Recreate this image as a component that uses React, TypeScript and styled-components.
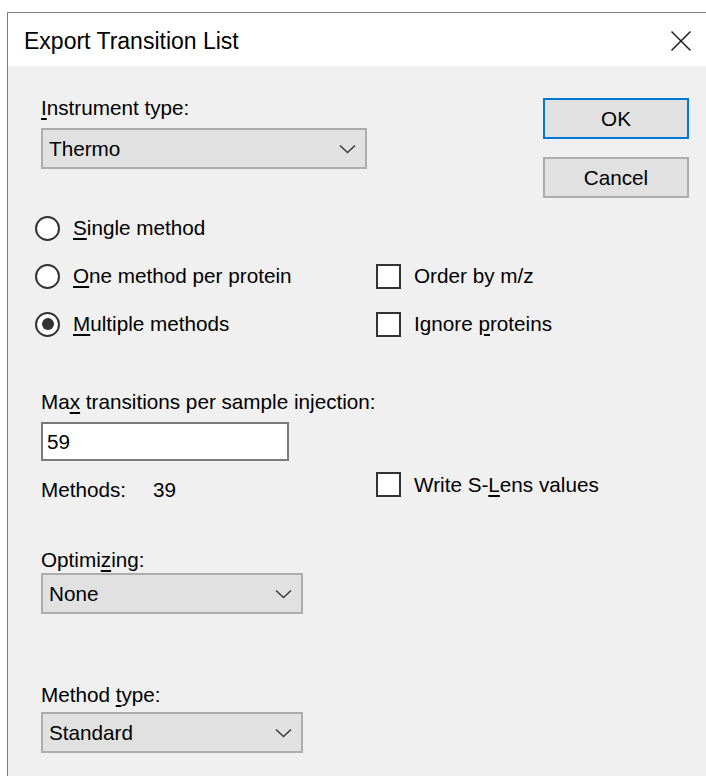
import React from "react";
import styled, { createGlobalStyle } from "styled-components";

const GlobalStyle = createGlobalStyle`
  html, body {
    margin: 0;
    padding: 0;
    background: #ffffff;
  }
  body {
    font-family: "Liberation Sans", Arial, sans-serif;
    font-size: 20.7px;
    color: #000000;
  }
  * { box-sizing: border-box; }
`;

const Window = styled.div`
  margin: 12px 0 0 7px;
  height: 764px;
  border-left: 1px solid #7c7c7c;
  border-top: 1px solid #7c7c7c;
  background: #f0f0f0;
  display: flex;
  flex-direction: column;
  overflow: hidden;
`;

const TitleBar = styled.div`
  height: 53px;
  background: #ffffff;
  display: flex;
  align-items: flex-start;
  justify-content: space-between;
  padding: 16px 14px 0 16px;
`;

const Title = styled.span`
  font-size: 23px;
  line-height: 24px;
  white-space: nowrap;
`;

const CloseButton = styled.button`
  width: 22px;
  height: 22px;
  padding: 0;
  border: none;
  background: transparent;
  display: flex;
  align-items: center;
  justify-content: center;
  margin-top: 1px;
`;

const Body = styled.div`
  flex: 1;
  padding: 30px 17px 0 33px;
  display: flex;
  flex-direction: column;
`;

const TopRow = styled.div`
  display: flex;
  justify-content: space-between;
  align-items: flex-start;
`;

const Field = styled.div<{ $top?: number }>`
  display: flex;
  flex-direction: column;
  margin-top: ${(p) => p.$top ?? 0}px;
`;

const Label = styled.span<{ $gap?: number }>`
  line-height: 24px;
  margin-bottom: ${(p) => p.$gap ?? 0}px;
  white-space: nowrap;
`;

const Key = styled.span`
  text-decoration: underline;
  text-decoration-thickness: 2px;
  text-underline-offset: 3px;
`;

const Combo = styled.div<{ $width: number }>`
  width: ${(p) => p.$width}px;
  height: 41px;
  background: #e1e1e1;
  border: 2px solid #adadad;
  display: flex;
  align-items: center;
  justify-content: space-between;
  padding: 0 9px 0 6px;
  line-height: 24px;
`;

const ButtonColumn = styled.div`
  display: flex;
  flex-direction: column;
  gap: 18px;
  margin-top: 2px;
`;

const DialogButton = styled.button<{ $default?: boolean }>`
  width: 146px;
  height: 41px;
  background: #e1e1e1;
  border: 2px solid ${(p) => (p.$default ? "#0078d7" : "#adadad")};
  font-family: inherit;
  font-size: 20.7px;
  color: #000;
  padding: 0;
`;

const OptionsGrid = styled.div`
  display: grid;
  grid-template-columns: 341px auto;
  grid-auto-rows: 48px;
  margin: 6px 0 0 -6px;
`;

const Choice = styled.label`
  display: flex;
  align-items: center;
  line-height: 24px;
  white-space: nowrap;
`;

const RadioMark = styled.span<{ $on?: boolean }>`
  width: 25px;
  height: 25px;
  border-radius: 50%;
  border: 2px solid #333333;
  background: #ffffff;
  margin-right: 13px;
  display: flex;
  align-items: center;
  justify-content: center;
  flex: none;
  &::after {
    content: "";
    width: 12px;
    height: 12px;
    border-radius: 50%;
    background: #333333;
    display: ${(p) => (p.$on ? "block" : "none")};
  }
`;

const CheckMark = styled.span`
  width: 25px;
  height: 25px;
  border: 2px solid #333333;
  background: #ffffff;
  margin-right: 13px;
  flex: none;
`;

const InjectionRow = styled.div`
  display: grid;
  grid-template-columns: 335px auto;
  margin-top: 42px;
`;

const TextBox = styled.div`
  width: 248px;
  height: 39px;
  background: #ffffff;
  border: 2px solid #7a7a7a;
  display: flex;
  align-items: center;
  padding: 0 4px;
  line-height: 24px;
`;

const Stat = styled.div`
  display: flex;
  line-height: 24px;
  margin-top: 17px;
`;

const StatName = styled.span`
  width: 112px;
`;

const SideCheck = styled.div`
  padding-top: 82px;
`;

const Chevron = () => (
  <svg width="17" height="10" viewBox="0 0 17 10">
    <path d="M1 1.5 L8.5 8.5 L16 1.5" fill="none" stroke="#3c3c3c" strokeWidth="1.6" />
  </svg>
);

export default function App() {
  return (
    <>
      <GlobalStyle />
      <Window>
        <TitleBar>
          <Title>Export Transition List</Title>
          <CloseButton aria-label="Close">
            <svg width="22" height="22" viewBox="0 0 22 22">
              <path d="M1.5 1.5 L20.5 20.5 M20.5 1.5 L1.5 20.5" stroke="#1e1e1e" strokeWidth="1.5" />
            </svg>
          </CloseButton>
        </TitleBar>
        <Body>
          <TopRow>
            <Field>
              <Label $gap={8}>
                <Key>I</Key>nstrument type:
              </Label>
              <Combo $width={326}>
                <span>Thermo</span>
                <Chevron />
              </Combo>
            </Field>
            <ButtonColumn>
              <DialogButton $default>OK</DialogButton>
              <DialogButton>Cancel</DialogButton>
            </ButtonColumn>
          </TopRow>

          <OptionsGrid>
            <Choice>
              <RadioMark />
              <span>
                <Key>S</Key>ingle method
              </span>
            </Choice>
            <span />
            <Choice>
              <RadioMark />
              <span>
                <Key>O</Key>ne method per protein
              </span>
            </Choice>
            <Choice>
              <CheckMark />
              <span>Order by m/z</span>
            </Choice>
            <Choice>
              <RadioMark $on />
              <span>
                <Key>M</Key>ultiple methods
              </span>
            </Choice>
            <Choice>
              <CheckMark />
              <span>
                Ignore <Key>p</Key>roteins
              </span>
            </Choice>
          </OptionsGrid>

          <InjectionRow>
            <Field>
              <Label $gap={8}>
                Ma<Key>x</Key> transitions per sample injection:
              </Label>
              <TextBox>59</TextBox>
              <Stat>
                <StatName>Methods:</StatName>
                <span>39</span>
              </Stat>
            </Field>
            <SideCheck>
              <Choice>
                <CheckMark />
                <span>
                  Write S-<Key>L</Key>ens values
                </span>
              </Choice>
            </SideCheck>
          </InjectionRow>

          <Field $top={46}>
            <Label $gap={1}>
              Optimi<Key>z</Key>ing:
            </Label>
            <Combo $width={262}>
              <span>None</span>
              <Chevron />
            </Combo>
          </Field>

          <Field $top={69}>
            <Label $gap={5}>
              Method <Key>t</Key>ype:
            </Label>
            <Combo $width={262}>
              <span>Standard</span>
              <Chevron />
            </Combo>
          </Field>
        </Body>
      </Window>
    </>
  );
}
